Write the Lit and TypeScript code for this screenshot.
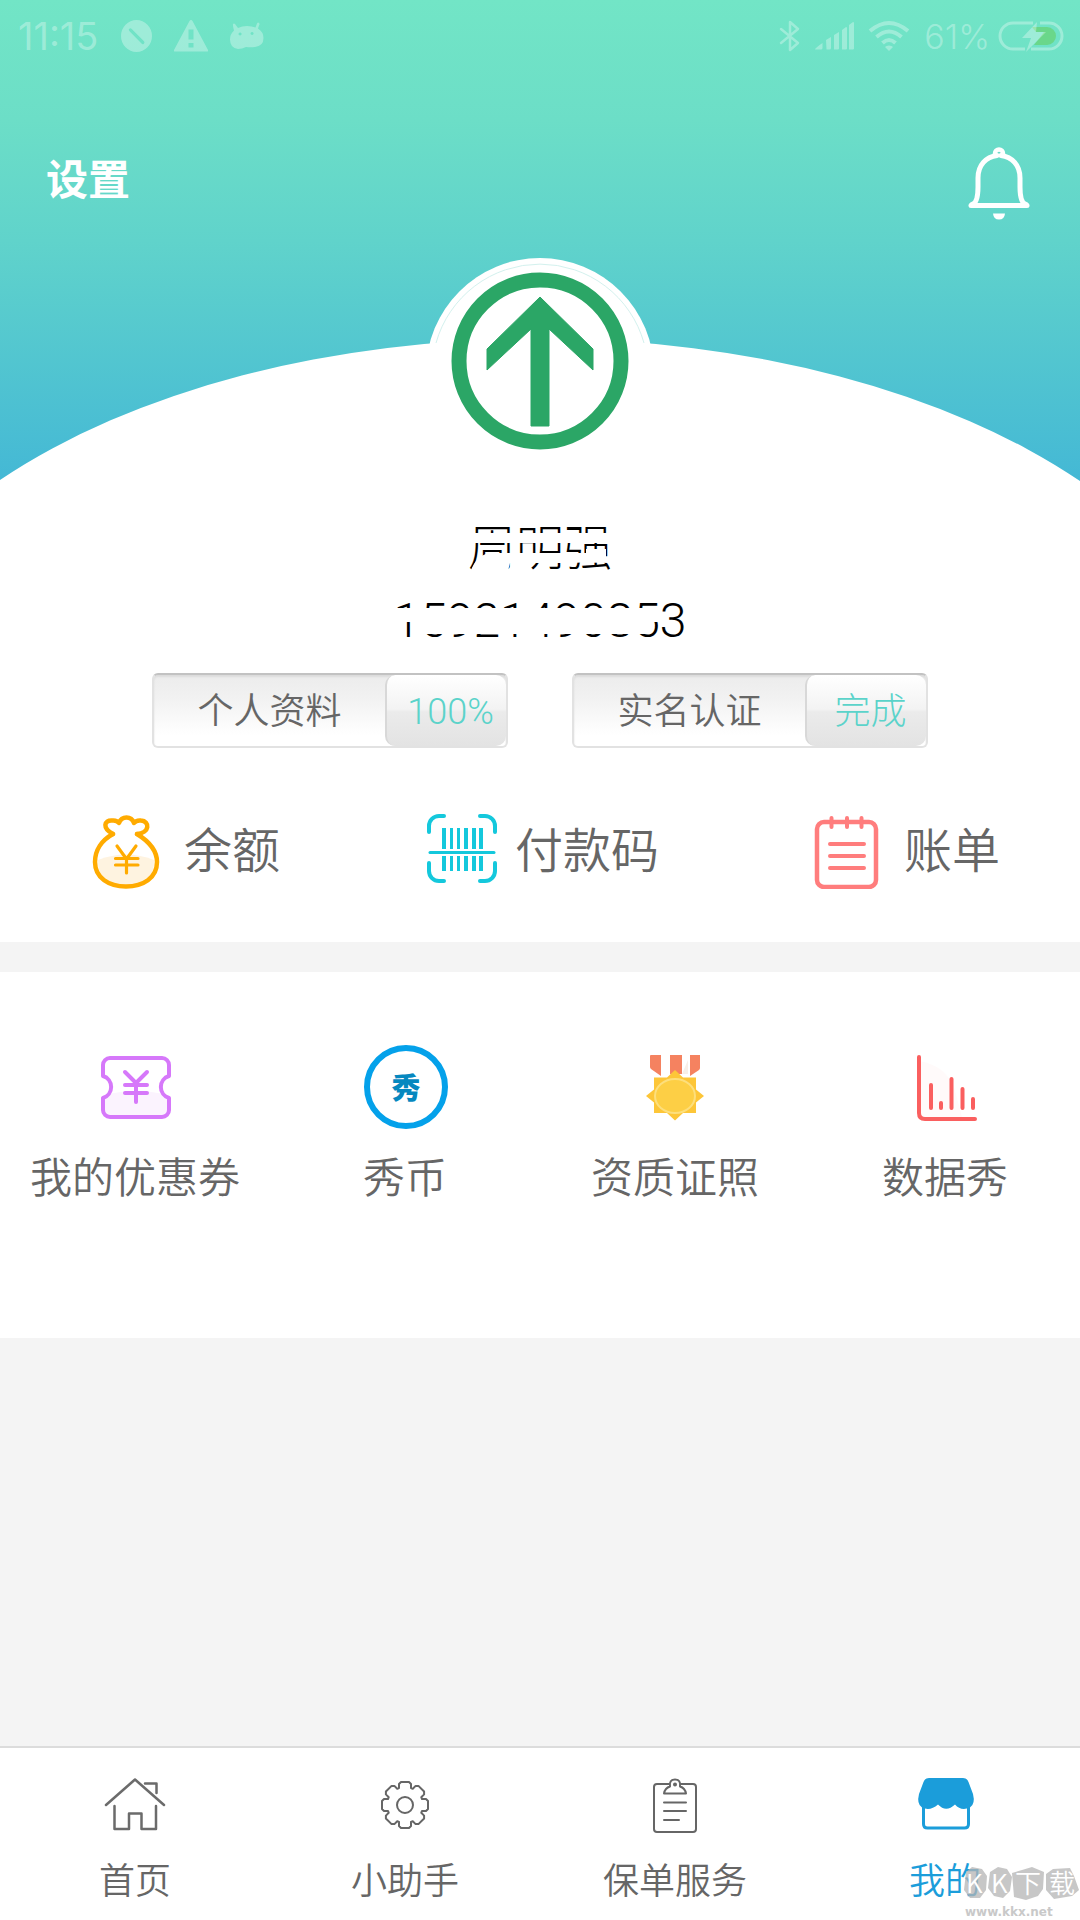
import { LitElement, html, css, svg } from "lit";
import { customElement, property } from "lit/decorators.js";

const sans = css`"Noto Sans CJK SC", "Noto Sans", sans-serif`;
const latin = css`Roboto, "Noto Sans CJK SC", sans-serif`;

/* Outline of an eight-toothed gear centred on the origin. */
const gearPath = (() => {
  const tooth = [
    [-6, -17],
    [-6, -21],
    [-4, -23],
    [4, -23],
    [6, -21],
    [6, -17],
  ];
  const pts: string[] = [];
  for (let i = 0; i < 8; i++) {
    const a = (i * Math.PI) / 4;
    for (const [x, y] of tooth) {
      const px = x * Math.cos(a) - y * Math.sin(a);
      const py = x * Math.sin(a) + y * Math.cos(a);
      pts.push(`${px.toFixed(2)} ${py.toFixed(2)}`);
    }
  }
  return `M${pts.join("L")}Z`;
})();

@customElement("status-bar")
class StatusBar extends LitElement {
  static styles = css`
    :host {
      display: block;
      color: rgba(255, 255, 255, 0.32);
      font-family: Inter, Roboto, sans-serif;
      font-weight: 300;
    }
    .bar {
      display: flex;
      justify-content: space-between;
      height: 72px;
      padding: 0 16px 0 18px;
    }
    .side {
      display: flex;
      align-items: center;
      gap: 22px;
    }
    .right {
      gap: 14px;
    }
    .time {
      font-size: 38px;
      font-weight: 400;
    }
    .level {
      display: flex;
      align-items: center;
      gap: 8px;
      font-size: 34px;
    }
    svg {
      display: block;
    }
  `;
  render() {
    return html`<div class="bar">
      <div class="side">
        <span class="time">11:15</span>
        <svg width="32" height="34" viewBox="-1 0 32 34" fill="currentColor">
          <path
            fill-rule="evenodd"
            d="M15.500 1a15.500 16 0 0 1 0 32a15.500 16 0 0 1 0-32ZM8.300 9.800a1.500 1.500 0 0 0 0 2.200L20.500 24.500a1.500 1.500 0 0 0 2.500-2.200L10.500 9.800a1.500 1.500 0 0 0-2.200 0Z"
          />
        </svg>
        <svg width="34" height="34" viewBox="0 0 34 34" fill="currentColor">
          <path
            fill-rule="evenodd"
            d="M17 1q1 0 1.500 1L34 31q.5 1.500-1 1.500H1Q-.5 32.500 0 31L15.500 2Q16 1 17 1ZM14.500 10.500v10h5v-10ZM14.500 24v4.500h5V24Z"
          />
        </svg>
        <svg width="34" height="34" viewBox="0 0 34 34" fill="currentColor">
          <path
            fill-rule="evenodd"
            d="M3 5q1-1 2 0l3 4q4-2 9-2t8.500 1.500L27 4.500q1-1.500 2-.5t0 2.500L28 9.500q5.500 3.500 5.500 9.500 0 8-8.500 9-5 .5-9 0-4 2-8 2-8-1-8-9.500 0-5.500 4-9Q2.500 6 3 5ZM10 13.500a1.500 1.500 0 1 0 .1 0ZM22 13a1.500 1.500 0 1 0 .1 0Z"
          />
        </svg>
      </div>
      <div class="side right">
        <svg width="22" height="34" viewBox="-3 0 22 34" fill="none" stroke="currentColor" stroke-width="2.500" stroke-linejoin="round" stroke-linecap="round">
          <path d="M0 10l17 14-8 7V3l8 7L0 24" />
        </svg>
        <svg width="40" height="30" viewBox="-1 0 40 30" fill="currentColor">
          <path d="M0 28.500Q0 27 7.500 22v5q0 1.500-1.500 1.500ZM11 19l5-3v11q0 1.500-1.500 1.500h-3ZM19 14l5-3v16.500q0 1-1 1h-4ZM27 9l4-3q1 0 1 1v20.500q0 1-1 1h-4ZM34 4l4-3q1 0 1 1v25.500q0 1-1 1h-4Z" />
        </svg>
        <svg width="42" height="32" viewBox="0 0 42 32" fill="none" stroke="currentColor" stroke-width="4">
          <path d="M2 11Q21-5 40 11M8.500 17Q21 6 33.500 17M14.500 23Q21 17 27.500 23" />
          <path d="M21 25.500q3 0 4 1.500l-4 4-4-4q1-1.500 4-1.500Z" fill="currentColor" stroke="none" />
        </svg>
        <span class="level">
          61%
          <svg width="66" height="34" viewBox="0 0 66 34">
            <path d="M34 8h15a9 9 0 0 1 0 18H36l10-13h-8Z" fill="#69d57f" opacity="0.85" />
            <path d="M27 30H15A13 13 0 0 1 15 4H35M42 4h9a13 13 0 0 1 0 26H33" fill="none" stroke="currentColor" stroke-width="3" />
            <path d="M39 3L24 19h9l-5 14 20-20h-10Z" fill="currentColor" />
          </svg>
        </span>
      </div>
    </div>`;
  }
}

@customElement("status-pill")
class StatusPill extends LitElement {
  @property() label = "";
  @property() value = "";
  static styles = css`
    :host {
      display: block;
    }
    .pill {
      box-sizing: border-box;
      display: flex;
      width: 356px;
      height: 75px;
      margin: 0;
      padding: 0;
      border: 2px solid #e2e2e2;
      border-top-color: #c2c2c2;
      border-radius: 6px;
      background: linear-gradient(#ececec, #f1f1f1 30%, #fff 85%);
      box-shadow: inset 0 2px 2px #dcdcdc;
      font-family: ${sans};
      font-size: 36px;
      font-weight: 350;
      line-height: 66px;
      color: #666;
    }
    .label {
      flex: 1;
    }
    .value {
      box-sizing: border-box;
      height: 71px;
      width: 121px;
      padding-left: 8px;
      border-left: 2px solid #d8d8d8;
      border-radius: 10px;
      background: linear-gradient(#fff, #f3f3f3 48%, #ebebeb 52%, #e3e3e3);
      font-family: ${latin};
      font-weight: 300;
      line-height: 74px;
      color: #5bd3ca;
    }
  `;
  render() {
    return html`<button class="pill" type="button">
      <span class="label">${this.label}</span><span class="value">${this.value}</span>
    </button>`;
  }
}

const bell = svg`<svg width="62" height="76" viewBox="0 0 62 76" fill="none" stroke="#fff" stroke-width="5" stroke-linecap="round" stroke-linejoin="round">
  <path d="M27 12V8.500a4 4 0 0 1 8 0V12" stroke-width="4.500" stroke-linecap="butt"/>
  <path d="M3 60.500H59"/>
  <path d="M4 59.500Q10 58 10 42V33C10 20 18 12 29 10.500M33 10.500C44 12 52 20 52 33V42Q52 58 58 59.500"/>
  <path d="M25 68.500h12q-.5 6-6 6t-6-6Z" fill="#fff" stroke="none"/>
</svg>`;

const avatar = svg`<svg width="228" height="228" viewBox="0 0 228 228">
  <circle cx="114" cy="114" r="114" fill="#fff"/>
  <path d="M10 85A108 108 0 0 1 218 85" fill="none" stroke="#d3f1ee" stroke-width="1"/>
  <circle cx="114" cy="103" r="81" fill="#fff" stroke="#2ba666" stroke-width="15"/>
  <path d="M114 39L167 91V112L123 71V168H105V71L61 112V91Z" fill="#2ba666" stroke="#2ba666" stroke-width="1" stroke-linejoin="round"/>
</svg>`;

const moneyBag = svg`<svg width="74" height="76" viewBox="0 -1 74 76">
  <path d="M6 46Q34 35 62 46Q63 71 34 72Q5 71 6 46Z" fill="#fef3e0"/>
  <g fill="none" stroke="#ffab00" stroke-width="4.500" stroke-linecap="round" stroke-linejoin="round">
    <path d="M21 20C10 26 3 36 3 48C3 64 17 72.500 34 72.500S65 64 65 48C65 38 58 28 45 20"/>
    <path d="M21 20C10 14 12 6 20 6.500Q25 6 27 9Q29 3.500 34.500 3.500T42 9Q44 6 49 6.500C58 7 58 19 45 20"/>
    <path d="M25 32L34.500 45L44 32M34.500 45V59M23.500 44.500H46M23.500 51H46" stroke-width="3.200"/>
  </g>
</svg>`;

const barcode = svg`<svg width="70" height="72" viewBox="1 0 70 72">
  <path d="M3 19V13A10 10 0 0 1 13 3H18M54 3H59A10 10 0 0 1 69 13V19M3 50V58A10 10 0 0 0 13 68H18M54 68H59A10 10 0 0 0 69 58V50" fill="none" stroke="#14c8dc" stroke-width="4" stroke-linecap="round"/>
  <path d="M16 15h4v21h-4ZM24 15h3v21h-3ZM31 15h3v21h-3ZM38 15h4v21h-4ZM46 15h4v21h-4ZM53 15h4v21h-4ZM16 43h4v15h-4ZM24 43h3v15h-3ZM31 43h3v15h-3ZM38 43h4v15h-4ZM46 43h4v15h-4ZM53 43h4v15h-4Z" fill="#14c8dc"/>
  <path d="M4 39.500H68" stroke="#14c8dc" stroke-width="3" stroke-linecap="round"/>
</svg>`;

const bill = svg`<svg width="80" height="76" viewBox="-7 -1 80 76" fill="none" stroke="#ff7d7d" stroke-width="4.500" stroke-linecap="round">
  <rect x="4" y="8" width="59" height="65" rx="7"/>
  <path d="M18.500 4V13M34 4V13M48.500 4V13M17 30H51M17 42H51M17 54H51" stroke-width="4"/>
</svg>`;

const coupon = svg`<svg width="84" height="84" viewBox="-1 0 84 84">
  <path d="M11 50Q42 42 73 50V68Q73 72 68 72H16Q11 72 11 68Z" fill="#fbf3fe"/>
  <g fill="none" stroke="#d678fa" stroke-width="4" stroke-linecap="round" stroke-linejoin="round">
    <path d="M16 13H68A7 7 0 0 1 75 20V31A11.500 11.500 0 0 0 75 53V65A7 7 0 0 1 68 72H16A7 7 0 0 1 9 65V53A11.500 11.500 0 0 0 9 31V20A7 7 0 0 1 16 13Z"/>
    <path d="M31 27L42 38L53 27M42 38V57M31 40H53M31 48H53"/>
  </g>
</svg>`;

const coin = svg`<svg width="86" height="84" viewBox="-2 0 86 84">
  <circle cx="42" cy="42" r="39" fill="#fff" stroke="#04a1ea" stroke-width="6"/>
  <text x="42" y="54" text-anchor="middle" font-size="29" font-weight="900" fill="#0688bf">秀</text>
</svg>`;

const medal = svg`<svg width="84" height="84" viewBox="0 0 84 84">
  <path d="M49 29L55 15V29Z" fill="#f7efe8"/>
  <path d="M17 11q0-1 1-1H28V31L18 24q-1-1-1-2ZM37 10H49V29H37ZM57 10H67v13q0 1-1 2l-9 6Z" fill="#f58260"/>
  <path d="M42 25L50 32.500H63V44.500L71 51L63 57.500V68H50L42 75.500L34 68H21V57.500L13 51L21 44.500V32.500H34Z" fill="#fdc638"/>
  <ellipse cx="42" cy="51" rx="20" ry="17" fill="#fdcf45" stroke="#fddf7c" stroke-width="2"/>
</svg>`;

const chart = svg`<svg width="84" height="84" viewBox="-1 0 84 84">
  <path d="M15 16Q40 20 50 42L58 72H15Z" fill="#fffafa"/>
  <g fill="none" stroke="#fa5f5f" stroke-width="4" stroke-linecap="round">
    <path d="M15 12V68Q15 74 21 74H71"/>
    <path d="M27 40V63M37 58V63M47.500 34V63M58.500 44V63M69 54V63"/>
  </g>
</svg>`;

const home = svg`<svg width="64" height="64" viewBox="0 0 64 64" fill="none" stroke="#6b6b6b" stroke-width="2.500" stroke-linecap="round" stroke-linejoin="round">
  <path d="M3 32L32 6.500L61 32M42 10.500H53.500V20M11.500 33V56H26V40.500H38.500V56H53V33"/>
</svg>`;

const gear = svg`<svg width="64" height="64" viewBox="-32 -32 64 64" fill="none" stroke="#666" stroke-width="2" stroke-linejoin="round">
  <path d="${gearPath}"/>
  <circle r="8"/>
</svg>`;

const clipboard = svg`<svg width="64" height="64" viewBox="0 0 64 64" fill="none" stroke="#666" stroke-width="2" stroke-linecap="round" stroke-linejoin="round">
  <path d="M26 11H14Q11 11 11 14V56Q11 59 14 59H50Q53 59 53 56V14Q53 11 50 11H38"/>
  <path d="M21 20.500H43Q42 15 37 13.500Q38 6.500 32 6.500T27 13.500Q22 15 21 20.500Z"/>
  <circle cx="32" cy="11.500" r="1" fill="#666"/>
  <path d="M21 29.500H43M21 38H43M21 47H36"/>
</svg>`;

const shop = svg`<svg width="64" height="64" viewBox="-1 0 64 64">
  <path d="M9.500 32V51Q9.500 55 13.500 55H50.500Q54.500 55 54.500 51V32" fill="none" stroke="#1b9dda" stroke-width="3"/>
  <path d="M15 5H49Q53 5 54.500 9L59 21Q61.500 31 56 34.500Q47 38.500 41 31.500Q32 40 24 31.500Q16 38.500 8 34.500Q2.500 31 5 21L9.500 9Q11 5 15 5Z" fill="#1b9dda"/>
</svg>`;

const actions = [
  { icon: moneyBag, text: "余额" },
  { icon: barcode, text: "付款码" },
  { icon: bill, text: "账单" },
];

const tools = [
  { icon: coupon, text: "我的优惠券" },
  { icon: coin, text: "秀币" },
  { icon: medal, text: "资质证照" },
  { icon: chart, text: "数据秀" },
];

const tabs = [
  { icon: home, text: "首页", active: false },
  { icon: gear, text: "小助手", active: false },
  { icon: clipboard, text: "保单服务", active: false },
  { icon: shop, text: "我的", active: true },
];

@customElement("app-root")
class AppRoot extends LitElement {
  static styles = css`
    :host {
      display: block;
      font-family: ${sans};
      font-weight: 350;
      color: #666;
    }
    svg {
      display: block;
      flex: none;
    }
    a {
      color: inherit;
      text-decoration: none;
    }
    .page {
      position: relative;
      display: flex;
      flex-direction: column;
      min-height: 100vh;
      background: #f4f4f4;
    }
    .hero {
      position: relative;
      padding-bottom: 53px;
      background: #fff;
    }
    .backdrop {
      position: absolute;
      top: 0;
      left: 0;
      width: 100%;
      height: 482px;
    }
    .content {
      position: relative;
      display: flex;
      flex-direction: column;
    }
    .topbar {
      display: flex;
      justify-content: space-between;
      align-items: flex-start;
      padding: 73px 50px 37px 46px;
    }
    .settings {
      font-size: 42px;
      font-weight: 700;
      line-height: 64px;
      color: #fff;
    }
    .bell {
      padding: 0;
      border: 0;
      background: none;
    }
    .avatar {
      align-self: center;
    }
    .identity {
      position: relative;
      align-self: center;
      margin-top: 27px;
      font-family: ${latin};
      font-size: 48px;
      font-weight: 300;
      line-height: 72px;
      text-align: center;
      color: #000;
    }
    .identity p {
      margin: 0;
    }
    .mask {
      position: absolute;
      top: 0;
      left: 0;
    }
    .pills {
      display: flex;
      justify-content: center;
      gap: 64px;
      margin-top: 16px;
    }
    .actions {
      display: flex;
      justify-content: space-between;
      align-items: flex-start;
      margin-top: 65px;
      padding: 0 80px 0 92px;
    }
    .action {
      display: flex;
      align-items: flex-start;
      gap: 18px;
      font-size: 48px;
      line-height: 68px;
    }
    .tools {
      display: grid;
      grid-template-columns: repeat(4, 1fr);
      margin-top: 30px;
      padding: 73px 0 132px;
      background: #fff;
    }
    .tool {
      display: flex;
      flex-direction: column;
      align-items: center;
      gap: 14px;
      font-size: 42px;
      line-height: 63px;
      white-space: nowrap;
    }
    .tabs {
      display: grid;
      grid-template-columns: repeat(4, 1fr);
      margin-top: auto;
      padding: 25px 0 15px;
      border-top: 2px solid #dcdcdc;
      background: #fff;
    }
    .tab {
      display: flex;
      flex-direction: column;
      align-items: center;
      gap: 14px;
      font-size: 36px;
      line-height: 54px;
    }
    .active {
      color: #1b9dda;
    }
    .watermark {
      position: absolute;
      right: 0;
      bottom: 0;
      pointer-events: none;
    }
  `;

  render() {
    return html`<div class="page">
      <section class="hero">
        <svg class="backdrop" viewBox="0 0 1080 482" preserveAspectRatio="none">
          <defs>
            <linearGradient id="sky" x1="0" y1="0" x2="0" y2="1">
              <stop offset="0" stop-color="#72e5c6" />
              <stop offset="0.25" stop-color="#6cdec7" />
              <stop offset="0.5" stop-color="#60d3cb" />
              <stop offset="1" stop-color="#44b8d5" />
            </linearGradient>
          </defs>
          <path d="M0 0H1080V481A700 390 0 0 0 0 480Z" fill="url(#sky)" />
        </svg>
        <div class="content">
          <status-bar></status-bar>
          <header class="topbar">
            <a class="settings" href="#settings">设置</a>
            <button class="bell" type="button" aria-label="消息">${bell}</button>
          </header>
          <div class="avatar">${avatar}</div>
          <div class="identity">
            <p>周明强</p>
            <p>15921490853</p>
            <svg class="mask" width="296" height="144" viewBox="0 0 296 144" fill="#fff">
              <path d="M60 20H240V30H60Z" />
              <path d="M74 66Q80 42 96 40H192V36H212V44L216 50Q190 49 170 50H116L112 66Z" />
              <path d="M0 95H266V109H0Z" />
              <path d="M24 108H256L254 121H24Z" />
            </svg>
          </div>
          <div class="pills">
            <status-pill label="个人资料" value="100%"></status-pill>
            <status-pill label="实名认证" value="完成"></status-pill>
          </div>
          <nav class="actions">
            ${actions.map((a) => html`<a class="action" href="#">${a.icon}<span>${a.text}</span></a>`)}
          </nav>
        </div>
      </section>
      <section class="tools">
        ${tools.map((t) => html`<a class="tool" href="#">${t.icon}<span>${t.text}</span></a>`)}
      </section>
      <nav class="tabs">
        ${tabs.map(
          (t) => html`<a class="tab ${t.active ? "active" : ""}" href="#">${t.icon}<span>${t.text}</span></a>`
        )}
      </nav>
      <svg class="watermark" width="124" height="66" viewBox="0 -10 124 66">
        <path d="M10 8L16 3L26 5L31 12L30 26L24 34L14 34L8 26ZM34 8L42 3L51 5L56 13L54 27L47 34L38 32L32 24ZM56 9L66 6L76 3L88 8L87 25L82 32L70 36L58 33ZM90 10L97 5L114 4L118 12L123 26L116 32L98 35L90 26Z" fill="#b4b4b4" opacity="0.75" />
        <g fill="#fff" font-size="26" font-weight="350">
          <text x="10" y="29">K</text>
          <text x="35" y="29">K</text>
          <text x="59" y="29">下</text>
          <text x="93" y="29">载</text>
        </g>
        <text x="9" y="52" font-family="DejaVu Sans" font-size="12" font-weight="700" fill="#c9c9c9">www.kkx.net</text>
      </svg>
    </div>`;
  }
}
